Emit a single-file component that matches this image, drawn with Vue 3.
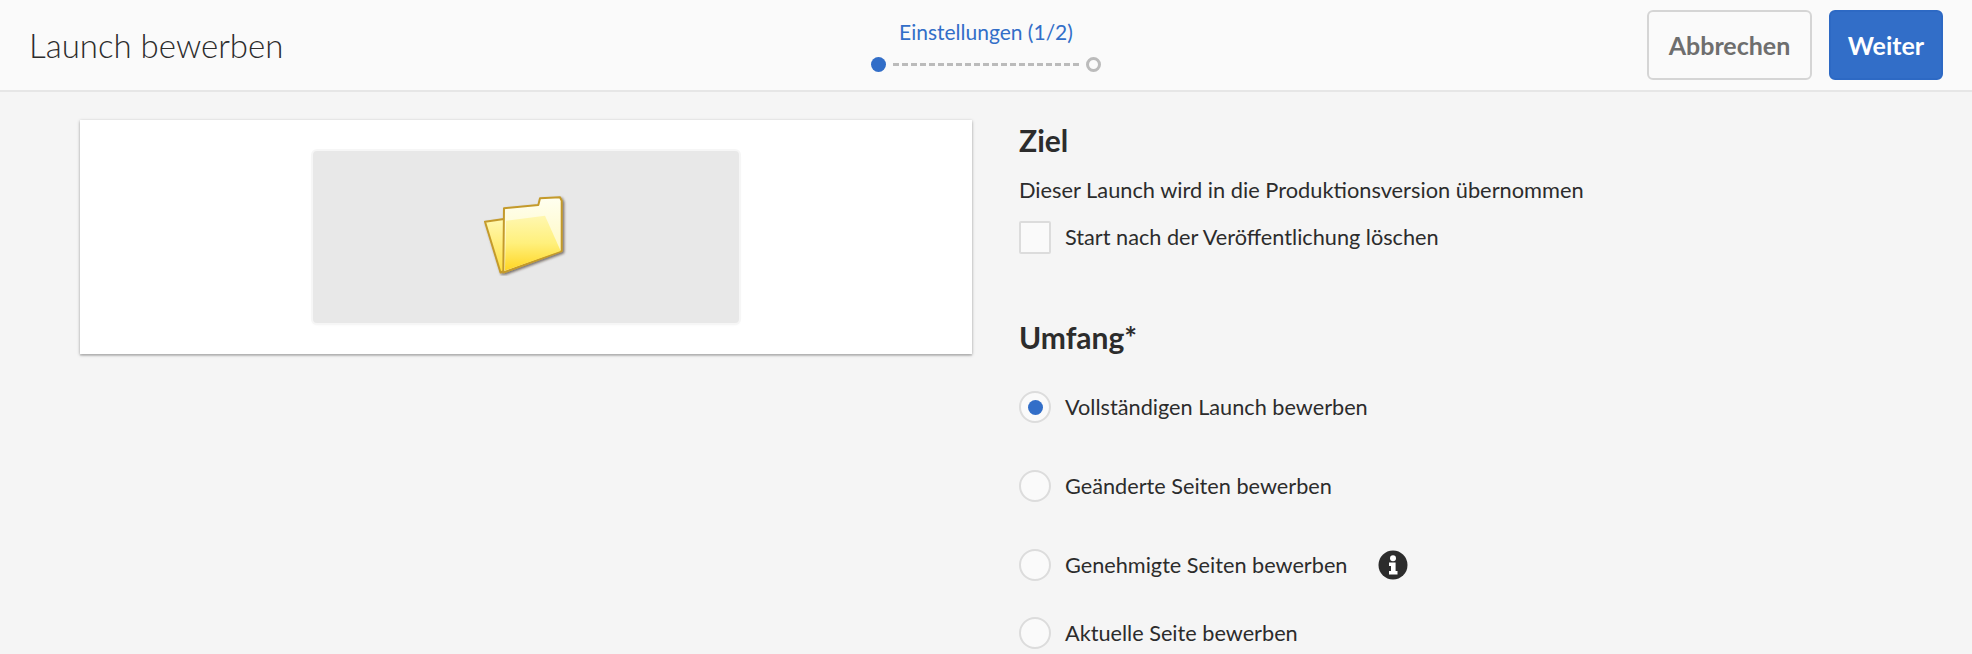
<template>
  <div class="page">
    <header class="bar">
      <h1 class="title">Launch bewerben</h1>
      <div class="wizard">
        <div class="step-label">Einstellungen (1/2)</div>
        <div class="track">
          <span class="dot on"></span>
          <span class="dash"></span>
          <span class="dot off"></span>
        </div>
      </div>
      <div class="actions">
        <button class="btn ghost">Abbrechen</button>
        <button class="btn primary">Weiter</button>
      </div>
    </header>
    <main class="main">
      <div class="left">
        <div class="card">
          <div class="thumb">
            <svg width="90" height="85" viewBox="0 0 90 85">
              <defs>
                <linearGradient id="front" x1="0" y1="0" x2="0" y2="1">
                  <stop offset="0" stop-color="#fff7b0" />
                  <stop offset="0.5" stop-color="#fff07c" />
                  <stop offset="1" stop-color="#ffd624" />
                </linearGradient>
                <linearGradient id="back" x1="0" y1="0" x2="0" y2="1">
                  <stop offset="0" stop-color="#fffff0" />
                  <stop offset="1" stop-color="#fff6b0" />
                </linearGradient>
                <linearGradient id="flap" x1="0" y1="0" x2="0" y2="1">
                  <stop offset="0" stop-color="#fff8b0" />
                  <stop offset="1" stop-color="#ffe040" />
                </linearGradient>
                <filter id="sh" x="-20%" y="-20%" width="140%" height="140%">
                  <feDropShadow dx="1.5" dy="1.5" stdDeviation="1.2" flood-color="#2a2410" flood-opacity="0.6" />
                </filter>
              </defs>
              <g filter="url(#sh)" stroke="#c49a2c" stroke-width="2" stroke-linejoin="round">
                <path d="M5 30.7 L24 28 L24 80 L20.5 81.5 Z" fill="url(#flap)" />
                <path d="M24 17.3 L58.3 14 L60 7.3 L80 6.3 L81.7 9.7 L81.7 60 L23.3 81.5 Z" fill="url(#back)" />
              </g>
              <path d="M26 29.7 L65 24.7 L80.7 60 L25 79.5 Z" fill="url(#front)" />
            </svg>
          </div>
        </div>
      </div>
      <div class="right">
        <h2 class="head">Ziel</h2>
        <p class="note">Dieser Launch wird in die Produktionsversion übernommen</p>
        <label class="check-row">
          <span class="box"></span>
          <span class="text">Start nach der Veröffentlichung löschen</span>
        </label>
        <h2 class="head scope">Umfang*</h2>
        <div class="radios">
          <label v-for="r in radios" :key="r.label" class="radio-row" :class="r.cls">
            <span class="radio" :class="{ sel: r.sel }"></span>
            <span class="text">{{ r.label }}</span>
            <svg v-if="r.info" class="info" width="30" height="30" viewBox="0 0 30 30">
              <circle cx="15" cy="15" r="14.5" fill="#2c2c2c" />
              <circle cx="15" cy="8.2" r="3" fill="#fff" />
              <path d="M11 12.5 H17.6 V21 H19.5 V24.5 H11 V21 H13 V16 H11 Z" fill="#fff" />
            </svg>
          </label>
        </div>
      </div>
    </main>
  </div>
</template>

<script setup>
const radios = [
  { label: 'Vollständigen Launch bewerben', sel: true, cls: 'r1' },
  { label: 'Geänderte Seiten bewerben', cls: 'r2' },
  { label: 'Genehmigte Seiten bewerben', info: true, cls: 'r3' },
  { label: 'Aktuelle Seite bewerben', cls: 'r4' },
]
</script>

<style>
html, body { margin: 0; background: #f5f5f5; overflow: hidden; }
</style>

<style scoped>
.page {
  width: 1972px;
  height: 654px;
  overflow: hidden;
  background: #f5f5f5;
  font-family: Lato, "Noto Sans", sans-serif;
  color: #2c2c2c;
}
.bar {
  height: 90px;
  border-bottom: 2px solid #e6e6e6;
  background: #fafafa;
  display: grid;
  grid-template-columns: 1fr auto 1fr;
  align-items: center;
  padding: 0 29px;
}
.title {
  margin: 0;
  font-size: 33px;
  font-weight: 300;
  color: #2c2c2c;
}
.wizard {
  display: flex;
  flex-direction: column;
  align-items: center;
  gap: 12px;
}
.step-label {
  color: #326ec8;
  font-size: 21px;
  line-height: 26px;
}
.track {
  display: flex;
  align-items: center;
  gap: 7px;
  width: 230px;
}
.dot {
  box-sizing: border-box;
  width: 15px;
  height: 15px;
  border-radius: 50%;
  flex: none;
}
.dot.on { background: #326ec8; }
.dot.off { border: 3px solid #bbb; }
.dash {
  flex: 1;
  height: 3px;
  background: repeating-linear-gradient(90deg, #bbb 0 6px, transparent 6px 9px);
}
.actions {
  display: flex;
  justify-content: flex-end;
  gap: 17px;
}
.btn {
  height: 70px;
  border-radius: 6px;
  font: 700 25px Lato, sans-serif;
  padding: 0;
}
.ghost {
  width: 165px;
  background: #fafafa;
  border: 2px solid #d5d5d5;
  color: #6e6e6e;
}
.primary {
  width: 114px;
  background: #326ec8;
  border: 2px solid #2d69c4;
  color: #fff;
}
.main {
  display: flex;
  padding: 28px 0 0 80px;
}
.left { width: 892px; flex: none; }
.card {
  height: 234px;
  background: #fff;
  box-shadow: 0 1px 3px rgba(0, 0, 0, 0.35), 0 2px 1px rgba(0, 0, 0, 0.06);
  display: flex;
  justify-content: center;
  align-items: center;
}
.thumb {
  width: 426px;
  height: 172px;
  box-sizing: border-box;
  background: #e8e8e8;
  border-radius: 4px;
  box-shadow: 0 0 0 2px #f6f6f6, 0 1px 3px rgba(0, 0, 0, 0.1);
  display: flex;
  align-items: center;
  justify-content: center;
}
.thumb svg { margin-top: -8px; margin-left: -3px; }
.right { margin-left: 47px; }
.head {
  margin: 2px 0 0;
  font-size: 30px;
  line-height: 36px;
  font-weight: 700;
  color: #2c2c2c;
}
.note {
  margin: 19px 0 0;
  font-size: 21.8px;
  line-height: 26px;
}
.check-row {
  display: flex;
  align-items: center;
  gap: 14px;
  margin-top: 17px;
  height: 34px;
}
.text { font-size: 21.7px; line-height: 26px; }
.box {
  box-sizing: border-box;
  width: 32px;
  height: 33px;
  border: 2px solid #dcdcdc;
  background: #fafafa;
  border-radius: 2px;
}
.scope { margin-top: 65px; }
.radios { margin-top: 36px; }
.radio-row {
  display: flex;
  align-items: center;
  gap: 14px;
  height: 32px;
}
.r2, .r3 { margin-top: 47px; }
.r4 { margin-top: 36px; }
.radio {
  box-sizing: border-box;
  width: 32px;
  height: 32px;
  border: 2px solid #dcdcdc;
  border-radius: 50%;
  background: #fafafa;
  display: flex;
  align-items: center;
  justify-content: center;
}
.radio.sel::after {
  content: "";
  width: 15px;
  height: 15px;
  border-radius: 50%;
  background: #326ec8;
}
.info { margin-left: 17px; }
</style>
